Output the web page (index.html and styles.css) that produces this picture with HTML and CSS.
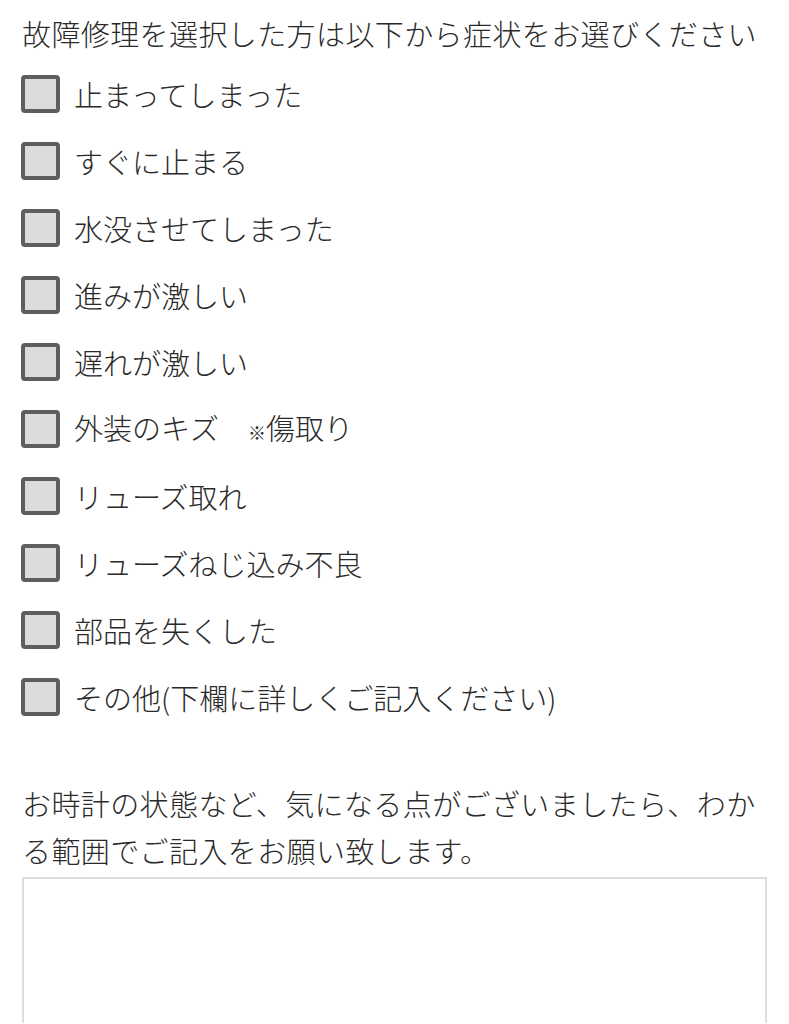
FILE: index.html
```html
<!DOCTYPE html>
<html lang="ja">
<head>
<meta charset="utf-8">
<link rel="stylesheet" href="styles.css">
</head>
<body>
<div class="page">
  <p class="title">故障修理を選択した方は以下から症状をお選びください</p>
  <ul class="options">
    <li class="option"><span class="box"></span><span class="label">止まってしまった</span></li>
    <li class="option"><span class="box"></span><span class="label">すぐに止まる</span></li>
    <li class="option"><span class="box"></span><span class="label">水没させてしまった</span></li>
    <li class="option"><span class="box"></span><span class="label">進みが激しい</span></li>
    <li class="option"><span class="box"></span><span class="label">遅れが激しい</span></li>
    <li class="option"><span class="box"></span><span class="label">外装のキズ　<span class="note">※</span>傷取り</span></li>
    <li class="option"><span class="box"></span><span class="label">リューズ取れ</span></li>
    <li class="option"><span class="box"></span><span class="label">リューズねじ込み不良</span></li>
    <li class="option"><span class="box"></span><span class="label">部品を失くした</span></li>
    <li class="option"><span class="box"></span><span class="label">その他(下欄に詳しくご記入ください)</span></li>
  </ul>
  <p class="desc">お時計の状態など、気になる点がございましたら、わかる範囲でご記入をお願い致します。</p>
  <div class="textarea"></div>
</div>
</body>
</html>
```

FILE: styles.css
```css
html, body {
  margin: 0;
  padding: 0;
  background: #fff;
}
.page {
  font-family: "Noto Sans CJK JP", "Noto Sans", sans-serif;
  color: #2a2a2a;
  padding: 12px 22px 0 22px;
  font-size: 29px;
  font-weight: 300;
}
.title {
  margin: 0;
  line-height: 42px;
  letter-spacing: 0.4px;
  white-space: nowrap;
}
.options {
  list-style: none;
  margin: 21px 0 0 0;
  padding: 0;
  display: flex;
  flex-direction: column;
  gap: 29px;
}
.option {
  display: flex;
  align-items: center;
  height: 38px;
}
.box {
  box-sizing: border-box;
  width: 39px;
  height: 38px;
  border: 4px solid #5e5e5e;
  border-radius: 4px;
  background: #dcdcdc;
  flex: none;
  margin-left: -1px;
}
.label {
  margin-left: 14px;
  line-height: 38px;
  letter-spacing: 0;
}
.note {
  font-size: 18px;
  font-weight: 400;
}
.desc {
  margin: 64px 0 0 0;
  line-height: 47px;
  letter-spacing: 0.4px;
}
.textarea {
  box-sizing: border-box;
  margin-top: 3px;
  width: 745px;
  height: 146px;
  border: 2px solid #dedede;
  border-bottom: none;
}
```
